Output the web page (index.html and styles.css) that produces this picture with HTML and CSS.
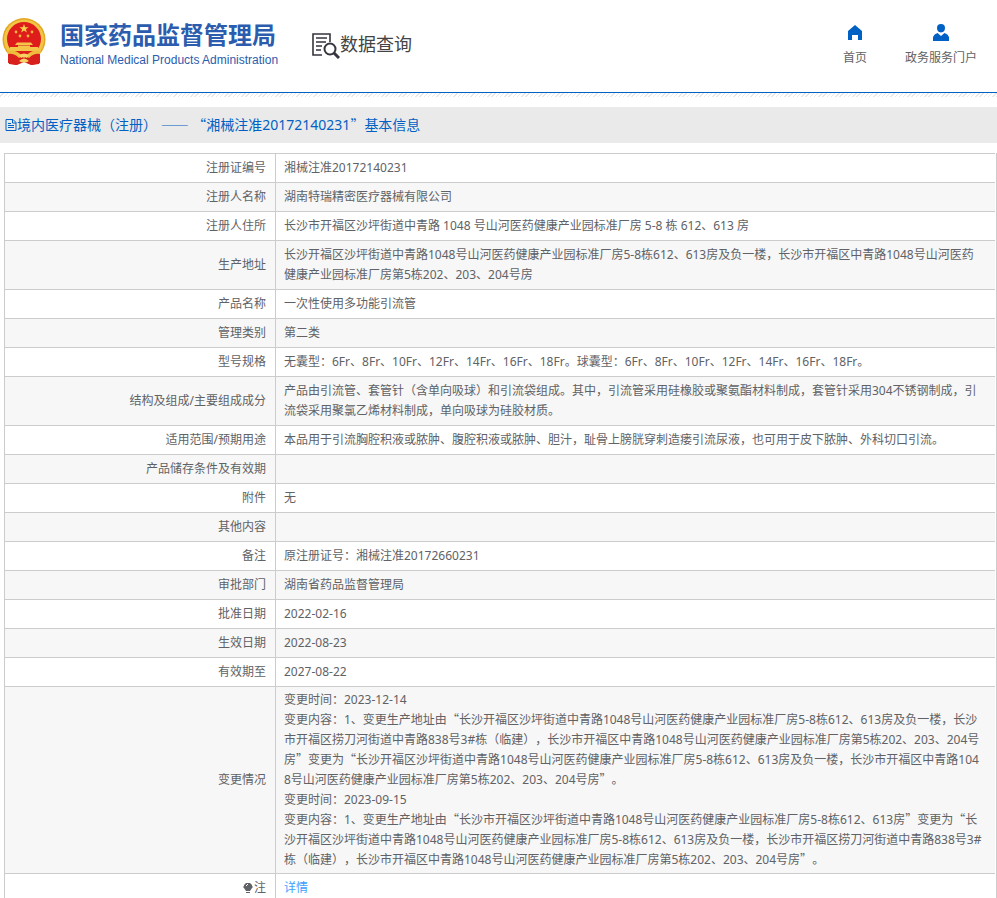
FILE: index.html
```
<!DOCTYPE html>
<html lang="zh-CN">

<head>
    <meta charset="UTF-8">
    <meta name="viewport" content="width=device-width, initial-scale=1.0">
    <title>国家药品监督管理局 数据查询</title>
    <link rel="stylesheet" href="styles.css">
</head>

<body>
    <header class="header">
        <div class="brand">
            <svg class="emblem" viewBox="0 0 44 48" aria-hidden="true">
                <path d="M7 34 L7 46 L15 47 L22 44 L29 47 L37 46 L37 34 Z" fill="#d3201c"/>
                <circle cx="22" cy="21.500" r="21.500" fill="#e3a722"/>
                <circle cx="22" cy="21.500" r="20" fill="#f2c544"/>
                <circle cx="22" cy="21" r="17" fill="#de1c1c"/>
                <path d="M22 6 L23.200 9.200 L26.500 9.300 L23.900 11.300 L24.800 14.500 L22 12.600 L19.200 14.500 L20.100 11.300 L17.500 9.300 L20.800 9.200 Z" fill="#f7cf4a"/>
                <g fill="#f2b53a">
                    <circle cx="14" cy="14" r="1.400"/>
                    <circle cx="30" cy="14" r="1.400"/>
                    <circle cx="18" cy="18" r="1.400"/>
                    <circle cx="26" cy="18" r="1.400"/>
                </g>
                <path d="M15 24.500 H29 L31 27 H13 Z M16 27.500 H28 V29 H36 V33 H8 V29 H16 Z" fill="#f3c64a"/>
                <path d="M6 34 Q14 32 22 40 Q30 32 38 34 L38 45 L30 47 L22 43 L14 47 L6 45 Z" fill="#d8201c"/>
                <path d="M5 33 Q14 31 20 38 L17 40 Q12 35 6 36 Z M39 33 Q30 31 24 38 L27 40 Q32 35 38 36 Z" fill="#efbd3c"/>
                <path d="M17 37 Q22 34 27 37 L25 40 Q22 38 19 40 Z M17 43 Q22 38 27 43 Q22 46 17 43 Z" fill="#f6d266"/>
            </svg>
            <div class="brand-text">
                <span class="brand-cn">国家药品监督管理局</span>
                <span class="brand-en">National Medical Products Administration</span>
            </div>
        </div>
        <div class="search-title">
            <svg class="search-icon" viewBox="0 0 28 28" fill="none" stroke="#35353f" aria-hidden="true">
                <path d="M18 10 V2 H1 V23 H10" stroke-width="1.600"/>
                <path d="M4 6 H15 M4 10 H14 M4 14 H10 M4 18 H9" stroke-width="1.500"/>
                <circle cx="18" cy="17" r="5.500" stroke-width="2"/>
                <path d="M22 21 L27 26" stroke-width="3"/>
            </svg>
            <span>数据查询</span>
        </div>
        <nav class="nav">
            <a href="#">
                <svg viewBox="0 0 16 17" aria-hidden="true">
                    <path d="M8 1 L15 7 V16 H11 V11 H5 V16 H1 V7 Z" fill="#0061c4"/>
                </svg>
                首页
            </a>
            <a href="#">
                <svg viewBox="0 0 16 17" aria-hidden="true">
                    <path d="M4 4 Q4 0 8 0 Q12 0 12 4 Q12 8 8 8.500 Q4 8 4 4 Z M0 17 V13 Q1 10 4.500 9 L8 12 L11.500 9 Q15 10 16 13 V17 Z" fill="#0061c4"/>
                </svg>
                政务服务门户
            </a>
        </nav>
    </header>
    <div class="stripes"></div>

    <h1 class="page-title">
        <svg viewBox="0 0 12 14" fill="none" stroke="#0061c4" aria-hidden="true">
            <path d="M1 1.500 H8 L11 4.500 V12.500 H1 Z M7.500 1.500 V5 H11 M3 5.500 H6 M3 7.500 H9 M3 9.500 H9"/>
        </svg>
        <span>境内医疗器械（注册） <span class="dash">——</span> <q>湘械注准20172140231</q>基本信息</span>
    </h1>

    <div class="table-wrap">
        <table class="info">
            <tbody>
                <tr><th scope="row">注册证编号</th><td>湘械注准20172140231</td></tr>
                <tr><th scope="row">注册人名称</th><td>湖南特瑞精密医疗器械有限公司</td></tr>
                <tr><th scope="row">注册人住所</th><td>长沙市开福区沙坪街道中青路 1048 号山河医药健康产业园标准厂房 5-8 栋 612、613 房</td></tr>
                <tr><th scope="row">生产地址</th><td>长沙开福区沙坪街道中青路1048号山河医药健康产业园标准厂房5-8栋612、613房及负一楼，长沙市开福区中青路1048号山河医药健康产业园标准厂房第5栋202、203、204号房</td></tr>
                <tr><th scope="row">产品名称</th><td>一次性使用多功能引流管</td></tr>
                <tr><th scope="row">管理类别</th><td>第二类</td></tr>
                <tr><th scope="row">型号规格</th><td>无囊型：6Fr、8Fr、10Fr、12Fr、14Fr、16Fr、18Fr。球囊型：6Fr、8Fr、10Fr、12Fr、14Fr、16Fr、18Fr。</td></tr>
                <tr><th scope="row">结构及组成/主要组成成分</th><td>产品由引流管、套管针（含单向吸球）和引流袋组成。其中，引流管采用硅橡胶或聚氨酯材料制成，套管针采用304不锈钢制成，引流袋采用聚氯乙烯材料制成，单向吸球为硅胶材质。</td></tr>
                <tr><th scope="row">适用范围/预期用途</th><td>本品用于引流胸腔积液或脓肿、腹腔积液或脓肿、胆汁，耻骨上膀胱穿刺造瘘引流尿液，也可用于皮下脓肿、外科切口引流。</td></tr>
                <tr><th scope="row">产品储存条件及有效期</th><td></td></tr>
                <tr><th scope="row">附件</th><td>无</td></tr>
                <tr><th scope="row">其他内容</th><td></td></tr>
                <tr><th scope="row">备注</th><td>原注册证号：湘械注准20172660231</td></tr>
                <tr><th scope="row">审批部门</th><td>湖南省药品监督管理局</td></tr>
                <tr><th scope="row">批准日期</th><td>2022-02-16</td></tr>
                <tr><th scope="row">生效日期</th><td>2022-08-23</td></tr>
                <tr><th scope="row">有效期至</th><td>2027-08-22</td></tr>
                <tr class="changes">
                    <th scope="row">变更情况</th>
                    <td>
                        变更时间：2023-12-14<br>
                        变更内容：1、变更生产地址由<q>长沙开福区沙坪街道中青路1048号山河医药健康产业园标准厂房5-8栋612、613房及负一楼，长沙市开福区捞刀河街道中青路838号3#栋（临建），长沙市开福区中青路1048号山河医药健康产业园标准厂房第5栋202、203、204号房</q>变更为<q>长沙开福区沙坪街道中青路1048号山河医药健康产业园标准厂房5-8栋612、613房及负一楼，长沙市开福区中青路1048号山河医药健康产业园标准厂房第5栋202、203、204号房</q>。<br>
                        变更时间：2023-09-15<br>
                        变更内容：1、变更生产地址由<q>长沙市开福区沙坪街道中青路1048号山河医药健康产业园标准厂房5-8栋612、613房</q>变更为<q>长沙开福区沙坪街道中青路1048号山河医药健康产业园标准厂房5-8栋612、613房及负一楼，长沙市开福区捞刀河街道中青路838号3#栋（临建），长沙市开福区中青路1048号山河医药健康产业园标准厂房第5栋202、203、204号房</q>。
                    </td>
                </tr>
                <tr>
                    <th scope="row">
                        <span class="note">
                            <svg class="bulb" viewBox="0 0 10 12" aria-hidden="true">
                                <path d="M3 1 H7 L9 3 V4 L10 5 L9 6 L7 9 H3 L1 6 L0 5 L1 4 V3 Z M3 10 H7 V11 H3 Z" fill="#606266"/>
                                <path d="M3 4 L5 2" stroke="#fff" fill="none"/>
                            </svg>注
                        </span>
                    </th>
                    <td><a class="detail" href="#">详情</a></td>
                </tr>
            </tbody>
        </table>
    </div>
</body>

</html>
```
FILE: styles.css
```
body {
    margin: 0;
    font-family: "Noto Sans", "Noto Sans CJK SC", sans-serif;
    font-size: 12px;
    line-height: 20px;
    color: #606266;
    background-color: #fff;
    text-spacing-trim: space-all;
}

a {
    color: inherit;
    text-decoration: none;
}

/* full-width quotes come from the CJK font */
q {
    quotes: "“" "”";
}

q::before,
q::after,
.dash {
    font-family: "Noto Sans CJK SC", sans-serif;
    line-height: 1;
}

.header {
    display: flex;
    align-items: center;
    height: 93px;
    padding: 0 20px 0 2px;
    border-bottom: 1px solid #0061c4;
    box-sizing: border-box;
}

.brand {
    display: flex;
    align-items: center;
    gap: 14px;
}

.emblem {
    width: 44px;
    height: 48px;
    margin-bottom: 8px;
}

.brand-text {
    display: flex;
    flex-direction: column;
    gap: 4px;
    padding-bottom: 4px;
    color: #2b5cad;
    white-space: nowrap;
}

.brand-cn {
    font-family: "Noto Sans CJK SC", sans-serif;
    font-size: 24px;
    font-weight: bold;
    line-height: 28px;
}

.brand-en {
    font-family: "Liberation Sans", Arial, sans-serif;
    font-size: 12px;
    line-height: 16px;
}

.search-title {
    display: flex;
    align-items: center;
    margin-left: 34px;
    padding-bottom: 4px;
    font-size: 18px;
    line-height: 28px;
    color: #444;
    white-space: nowrap;
}

.search-icon {
    width: 28px;
    height: 28px;
    margin-top: 4px;
}

.nav {
    display: flex;
    gap: 38px;
    margin-left: auto;
    white-space: nowrap;
}

.nav a {
    display: flex;
    flex-direction: column;
    align-items: center;
    gap: 7px;
}

.nav svg {
    width: 16px;
    height: 17px;
}

.stripes {
    height: 4px;
    background: repeating-linear-gradient(135deg, #fff 0, #fff 2px, #e8e8e8 2px, #e8e8e8 3px);
}

.page-title {
    display: flex;
    align-items: center;
    margin: 10px 0;
    padding: 8px 5px;
    font-size: 14px;
    font-weight: normal;
    color: #0061c4;
    background-color: #eaeaea;
}

.page-title svg {
    width: 12px;
    height: 14px;
}

.table-wrap {
    margin-left: 4px;
    padding-right: 1px;
    border-right: 1px solid #ccc;
}

.info {
    width: 100%;
    border-collapse: separate;
    border-spacing: 0;
    border-top: 1px solid #ccc;
    border-left: 1px solid #ccc;
    table-layout: fixed;
}

.info th,
.info td {
    height: 20px;
    padding: 4px 10px 4px 8px;
    border-bottom: 1px solid #ccc;
    word-break: break-all;
}

.info th {
    width: 253px;
    padding-right: 9px;
    border-right: 1px solid #ccc;
    font-weight: normal;
    text-align: right;
}

.info tr:nth-child(even) {
    background-color: #f7f7f7;
}

.info .changes th,
.info .changes td {
    padding-top: 3px;
    padding-bottom: 3px;
}

.note {
    display: flex;
    align-items: center;
    justify-content: flex-end;
    gap: 1px;
}

.bulb {
    width: 10px;
    height: 12px;
}

.detail {
    color: #409eff;
}
```
